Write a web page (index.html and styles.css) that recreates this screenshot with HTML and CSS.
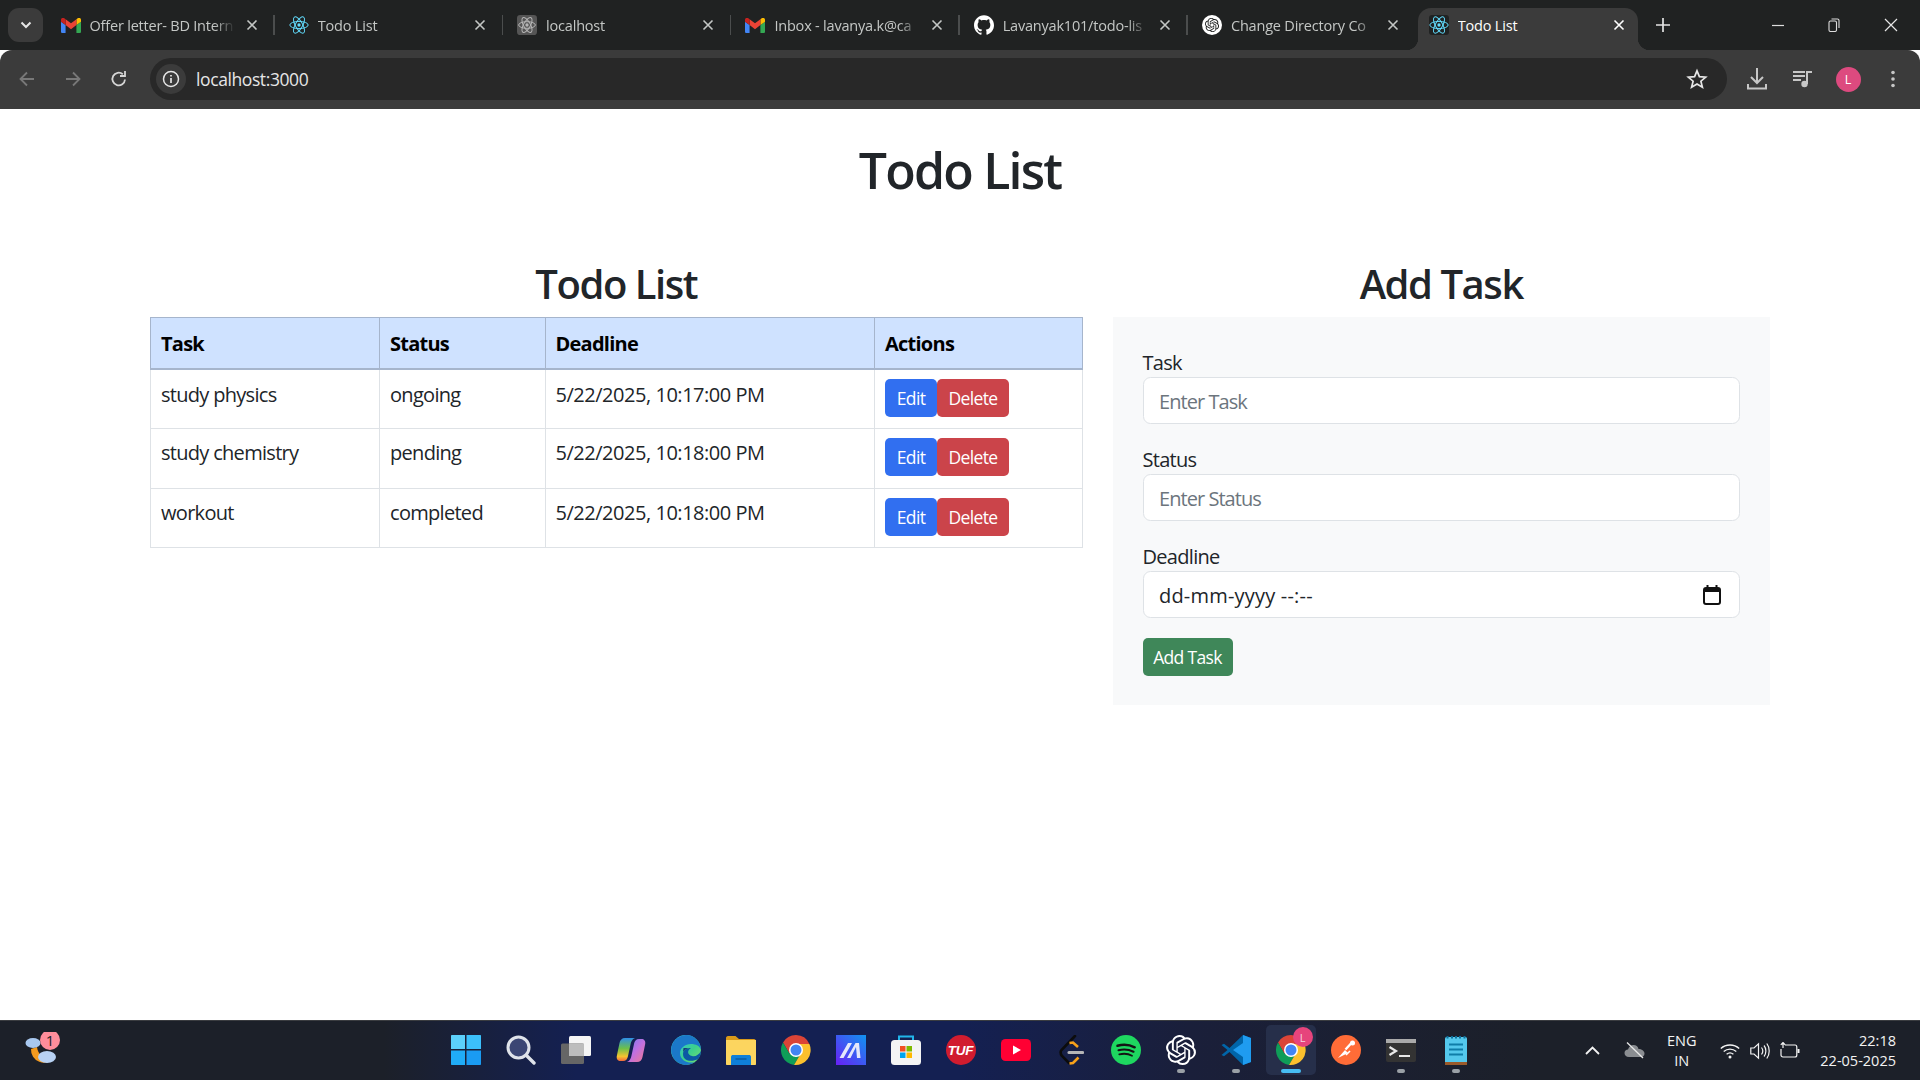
FILE: index.html
```html
<!DOCTYPE html>
<html lang="en">
<head>
<meta charset="utf-8">
<title>Todo List</title>
<link rel="stylesheet" href="styles.css">
</head>
<body>
<svg class="defs" width="0" height="0" aria-hidden="true">
  <defs>
    <symbol id="gmail" viewBox="0 0 24 18">
      <path fill="#4285f4" d="M1.6 18H5.5V8.5L0 4.4V16.4C0 17.3.7 18 1.6 18Z"/>
      <path fill="#34a853" d="M18.5 18H22.400C23.300 18 24 17.300 24 16.400V4.400L18.500 8.500Z"/>
      <path fill="#fbbc04" d="M18.500 1.400V8.500L24 4.400V2.200C24 .2 21.700-1 20.100.2Z"/>
      <path fill="#ea4335" d="M5.500 8.500V1.400L12 6.300 18.500 1.400V8.500L12 13.400Z"/>
      <path fill="#c5221f" d="M0 2.200V4.400L5.500 8.500V1.400L3.900.2C2.300-1 0 .2 0 2.200Z"/>
    </symbol>
    <symbol id="react" viewBox="0 0 24 24">
      <g fill="none" stroke="#61dafb" stroke-width="1.200">
        <ellipse cx="12" cy="12" rx="11" ry="4.300"/>
        <ellipse cx="12" cy="12" rx="11" ry="4.300" transform="rotate(60 12 12)"/>
        <ellipse cx="12" cy="12" rx="11" ry="4.300" transform="rotate(120 12 12)"/>
      </g>
      <circle cx="12" cy="12" r="2" fill="#61dafb"/>
    </symbol>
    <symbol id="react-grey" viewBox="0 0 24 24">
      <rect width="24" height="24" rx="4" fill="#555"/>
      <g fill="none" stroke="#b5b5b5" stroke-width="1.200">
        <ellipse cx="12" cy="12" rx="10" ry="4"/>
        <ellipse cx="12" cy="12" rx="10" ry="4" transform="rotate(60 12 12)"/>
        <ellipse cx="12" cy="12" rx="10" ry="4" transform="rotate(120 12 12)"/>
      </g>
      <circle cx="12" cy="12" r="2" fill="#b5b5b5"/>
    </symbol>
    <symbol id="openai" viewBox="0 0 24 24">
      <path fill="currentColor" d="M22.2819 9.8211a5.9847 5.9847 0 0 0-.5157-4.9108 6.0462 6.0462 0 0 0-6.5098-2.9A6.0651 6.0651 0 0 0 4.9807 4.1818a5.9847 5.9847 0 0 0-3.9977 2.9 6.0462 6.0462 0 0 0 .7427 7.0966 5.98 5.98 0 0 0 .511 4.9107 6.051 6.051 0 0 0 6.5146 2.9001A5.9847 5.9847 0 0 0 13.2599 24a6.0557 6.0557 0 0 0 5.7718-4.2058 5.9894 5.9894 0 0 0 3.9977-2.9001 6.0557 6.0557 0 0 0-.7475-7.0729zm-9.022 12.6081a4.4755 4.4755 0 0 1-2.8764-1.0408l.1419-.0804 4.7783-2.7582a.7948.7948 0 0 0 .3927-.6813v-6.7369l2.02 1.1686a.071.071 0 0 1 .038.052v5.5826a4.504 4.504 0 0 1-4.4945 4.4944zm-9.6607-4.1254a4.4708 4.4708 0 0 1-.5346-3.0137l.142.0852 4.783 2.7582a.7712.7712 0 0 0 .7806 0l5.8428-3.3685v2.3324a.0804.0804 0 0 1-.0332.0615L9.74 19.9502a4.4992 4.4992 0 0 1-6.1408-1.6464zM2.3408 7.8956a4.485 4.485 0 0 1 2.3655-1.9728V11.6a.7664.7664 0 0 0 .3879.6765l5.8144 3.3543-2.0201 1.1685a.0757.0757 0 0 1-.071 0l-4.8303-2.7865A4.504 4.504 0 0 1 2.3408 7.872zm16.5963 3.8558L13.1038 8.364 15.1192 7.2a.0757.0757 0 0 1 .071 0l4.8303 2.7913a4.4944 4.4944 0 0 1-.6765 8.1042v-5.6772a.79.79 0 0 0-.407-.667zm2.0107-3.0231l-.142-.0852-4.7735-2.7818a.7759.7759 0 0 0-.7854 0L9.409 9.2297V6.8974a.0662.0662 0 0 1 .0284-.0615l4.8303-2.7866a4.4992 4.4992 0 0 1 6.6802 4.66zM8.3065 12.863l-2.02-1.1638a.0804.0804 0 0 1-.038-.0567V6.0742a4.4992 4.4992 0 0 1 7.3757-3.4537l-.142.0805L8.704 5.459a.7948.7948 0 0 0-.3927.6813zm1.0976-2.3654l2.602-1.4998 2.6069 1.4998v2.9994l-2.5974 1.4997-2.6067-1.4997Z"/>
    </symbol>
    <symbol id="chrome" viewBox="0 0 30 30">
      <path fill="#db4437" d="M15 0A15 15 0 0 0 2 7.500L8.500 18.800 15 9H28.400A15 15 0 0 0 15 0Z"/>
      <path fill="#0f9d58" d="M2 7.500A15 15 0 0 0 13 29.900L19.500 19 8.500 18.800Z"/>
      <path fill="#fbc02d" d="M28.400 9H15L19.500 19 13 29.900A15 15 0 0 0 28.400 9Z"/>
      <circle cx="15" cy="15" r="7" fill="#fff"/>
      <circle cx="15" cy="15" r="5.500" fill="#4285f4"/>
    </symbol>
    <symbol id="close" viewBox="0 0 12 12">
      <path d="M1.500 1.500 10.500 10.500M10.500 1.500 1.500 10.500" fill="none" stroke="currentColor" stroke-width="1.600"/>
    </symbol>
  </defs>
</svg>

<header class="tabstrip">
  <button class="tabsearch" type="button" aria-label="Search tabs">
    <svg width="12" height="8" viewBox="0 0 12 8"><path d="M1.500 1.500 6 6 10.500 1.500" fill="none" stroke="#e6e6e6" stroke-width="2"/></svg>
  </button>
  <div class="tab sep"><svg class="fav gm"><use href="#gmail"/></svg><span class="tabtitle">Offer letter- BD Intern</span><svg class="tabclose"><use href="#close"/></svg></div>
  <div class="tab sep"><svg class="fav"><use href="#react"/></svg><span class="tabtitle">Todo List</span><svg class="tabclose"><use href="#close"/></svg></div>
  <div class="tab sep"><svg class="fav"><use href="#react-grey"/></svg><span class="tabtitle">localhost</span><svg class="tabclose"><use href="#close"/></svg></div>
  <div class="tab sep"><svg class="fav gm"><use href="#gmail"/></svg><span class="tabtitle">Inbox - lavanya.k@ca</span><svg class="tabclose"><use href="#close"/></svg></div>
  <div class="tab sep"><svg class="fav" viewBox="0 0 24 24"><path fill="#fff" d="M12 .297c-6.630 0-12 5.373-12 12 0 5.303 3.438 9.800 8.205 11.385.600.113.820-.258.820-.577 0-.285-.010-1.040-.015-2.040-3.338.724-4.042-1.610-4.042-1.610C4.422 18.070 3.633 17.700 3.633 17.700c-1.087-.744.084-.729.084-.729 1.205.084 1.838 1.236 1.838 1.236 1.070 1.835 2.809 1.305 3.495.998.108-.776.417-1.305.760-1.605-2.665-.300-5.466-1.332-5.466-5.930 0-1.310.465-2.380 1.235-3.220-.135-.303-.540-1.523.105-3.176 0 0 1.005-.322 3.300 1.230.960-.267 1.980-.399 3-.405 1.020.006 2.040.138 3 .405 2.280-1.552 3.285-1.230 3.285-1.230.645 1.653.240 2.873.120 3.176.765.840 1.230 1.910 1.230 3.220 0 4.610-2.805 5.625-5.475 5.920.420.360.810 1.096.810 2.220 0 1.606-.015 2.896-.015 3.286 0 .315.210.690.825.570C20.565 22.092 24 17.592 24 12.297c0-6.627-5.373-12-12-12"/></svg><span class="tabtitle">Lavanyak101/todo-lis</span><svg class="tabclose"><use href="#close"/></svg></div>
  <div class="tab"><svg class="fav" viewBox="0 0 24 24"><circle cx="12" cy="12" r="12" fill="#fff"/><use href="#openai" x="3.500" y="3.500" width="17" height="17" class="darkglyph"/></svg><span class="tabtitle">Change Directory Co</span><svg class="tabclose"><use href="#close"/></svg></div>
  <div class="tab active"><svg class="fav favbox"><use href="#react"/></svg><span class="tabtitle">Todo List</span><svg class="tabclose"><use href="#close"/></svg></div>
  <svg class="newtab" width="14" height="14" viewBox="0 0 14 14"><path d="M7 0V14M0 7H14" stroke="#e3e3e3" stroke-width="1.700"/></svg>
  <div class="winctl">
    <svg width="12" height="12" viewBox="0 0 12 12"><path d="M0 6.500H12" stroke="#ddd" stroke-width="1.200"/></svg>
    <svg width="12" height="14" viewBox="0 0 12 14"><path d="M1 4.500C1 3.500 1.500 3 2.500 3H7C8 3 8.500 3.500 8.500 4.500V12C8.500 13 8 13.500 7 13.500H2.500C1.500 13.500 1 13 1 12ZM3.500 1H9.500C10.500 1 11 1.500 11 2.500V10" fill="none" stroke="#ddd" stroke-width="1.100"/></svg>
    <svg width="14" height="14" viewBox="0 0 14 14"><path d="M1 1 13 13M13 1 1 13" stroke="#e6e6e6" stroke-width="1.200"/></svg>
  </div>
</header>

<nav class="toolbar">
  <svg class="tool dim" width="20" height="20" viewBox="0 0 20 20"><path d="M17 10H4M10 3.500 3.500 10 10 16.500" fill="none" stroke="currentColor" stroke-width="1.800"/></svg>
  <svg class="tool dim" width="20" height="20" viewBox="0 0 20 20"><path d="M3 10H16M10 3.500 16.500 10 10 16.500" fill="none" stroke="currentColor" stroke-width="1.800"/></svg>
  <svg class="tool" width="20" height="20" viewBox="0 0 20 20"><path d="M16 10.500A6.300 6.300 0 1 1 13.800 5.200M16 2V7H11" fill="none" stroke="currentColor" stroke-width="1.800"/></svg>
  <div class="omnibox">
    <span class="siteinfo"><svg width="18" height="18" viewBox="0 0 18 18"><circle cx="9" cy="9" r="7.500" fill="none" stroke="#e6e6e6" stroke-width="1.500"/><path d="M9 8V13M9 5V6.600" stroke="#e6e6e6" stroke-width="1.700"/></svg></span>
    <span class="url">localhost:3000</span>
    <svg class="star" width="22" height="22" viewBox="0 0 22 22"><path d="M11 2.800 13.400 8.600 19.700 9.100 14.900 13.200 16.400 19.300 11 16 5.600 19.300 7.100 13.200 2.300 9.100 8.600 8.600Z" fill="none" stroke="#e6e6e6" stroke-width="1.700"/></svg>
  </div>
  <div class="tools-right">
    <svg class="tr-dl" width="22" height="24" viewBox="0 0 22 24"><path d="M11 1V15M5 10 11 16 17 10" fill="none" stroke="#c7c7c7" stroke-width="2"/><path d="M2 17V21.500H20V17" fill="none" stroke="#c7c7c7" stroke-width="2"/></svg>
    <svg class="tr-media" width="20" height="20" viewBox="0 0 20 20"><path d="M0 3H12M0 7H12M0 11H8" stroke="#c7c7c7" stroke-width="1.800"/><path d="M14 3H19M14 2V15" fill="none" stroke="#c7c7c7" stroke-width="2"/><circle cx="11.500" cy="15" r="3.200" fill="#c7c7c7"/></svg>
    <span class="avatar">L</span>
    <svg class="tr-menu" width="4" height="18" viewBox="0 0 4 18"><circle cx="2" cy="2.500" r="1.800" fill="#c7c7c7"/><circle cx="2" cy="9" r="1.800" fill="#c7c7c7"/><circle cx="2" cy="15.500" r="1.800" fill="#c7c7c7"/></svg>
  </div>
</nav>

<main class="page">
  <h1 class="title">Todo List</h1>
  <div class="row">
    <section class="col-list">
      <h2 class="subtitle">Todo List</h2>
      <table class="tasks">
        <thead>
          <tr><th class="c1">Task</th><th class="c2">Status</th><th class="c3">Deadline</th><th class="c4">Actions</th></tr>
        </thead>
        <tbody>
          <tr><td>study physics</td><td>ongoing</td><td class="when">5/22/2025, 10:17:00 PM</td><td class="acts"><button class="btn edit" type="button">Edit</button><button class="btn del" type="button">Delete</button></td></tr>
          <tr><td>study chemistry</td><td>pending</td><td class="when">5/22/2025, 10:18:00 PM</td><td class="acts"><button class="btn edit" type="button">Edit</button><button class="btn del" type="button">Delete</button></td></tr>
          <tr><td>workout</td><td>completed</td><td class="when">5/22/2025, 10:18:00 PM</td><td class="acts"><button class="btn edit" type="button">Edit</button><button class="btn del" type="button">Delete</button></td></tr>
        </tbody>
      </table>
    </section>
    <section class="col-form">
      <h2 class="subtitle">Add Task</h2>
      <form class="panel">
        <div class="field"><label class="lbl" for="t">Task</label><input class="ctl" id="t" type="text" placeholder="Enter Task"></div>
        <div class="field"><label class="lbl" for="s">Status</label><input class="ctl" id="s" type="text" placeholder="Enter Status"></div>
        <div class="field">
          <label class="lbl" for="d">Deadline</label>
          <div class="ctl datectl" id="d"><span class="dateval">dd-mm-yyyy --:--</span>
            <svg width="18" height="20" viewBox="0 0 18 20"><path d="M4.500 0V3M13.500 0V3" stroke="#111" stroke-width="2"/><rect x="1" y="3" width="16" height="16" rx="2" fill="none" stroke="#111" stroke-width="2"/><rect x="1" y="3" width="16" height="4" fill="#111"/></svg>
          </div>
        </div>
        <button class="btn add" type="button">Add Task</button>
      </form>
    </section>
  </div>
</main>

<footer class="taskbar">
  <div class="weather">
    <svg width="40" height="38" viewBox="0 0 40 38">
      <path d="M8 17A13 13 0 0 0 31 26C22 27 15 24 14 15Z" fill="#f39a1e"/>
      <ellipse cx="10" cy="11" rx="7.500" ry="5" fill="#a8c8f0"/>
      <ellipse cx="24" cy="25" rx="9" ry="6" fill="#b8d2f4"/>
      <circle cx="27" cy="8" r="10" fill="#ff8d9b"/>
    </svg>
    <span class="wbadge">1</span>
  </div>
  <div class="apps">
    <span class="app"><svg width="30" height="30" viewBox="0 0 30 30"><path fill="#5cd0fb" d="M1 0H14V14H0V1C0 .4.400 0 1 0Z"/><path fill="#3cc0fb" d="M15.500 0H29C29.600 0 30 .4 30 1V14H15.500Z"/><path fill="#20acf7" d="M0 15.500H14V30H1C.4 30 0 29.600 0 29Z"/><path fill="#1a9bf2" d="M15.500 15.500H30V29C30 29.600 29.600 30 29 30H15.500Z"/></svg></span>
    <span class="app"><svg width="30" height="30" viewBox="0 0 30 30"><circle cx="12.500" cy="12.500" r="10.500" fill="#3b4674" stroke="#dfe3ea" stroke-width="3"/><path d="M20.500 20.500 28 28" stroke="#dfe3ea" stroke-width="3.400" stroke-linecap="round"/></svg></span>
    <span class="app"><svg width="30" height="30" viewBox="0 0 30 30"><rect x="8" y="1" width="22" height="20" rx="1.500" fill="#f5f5f5"/><rect y="8.500" width="23" height="20.500" rx="1.500" fill="#666"/><rect x="8" y="8.500" width="15" height="12.500" fill="#bdbdbd"/></svg></span>
    <span class="app"><svg width="30" height="30" viewBox="0 0 30 30"><defs><linearGradient id="cp1" x1="0" y1="0" x2="0" y2="1"><stop offset="0" stop-color="#2f8fe8"/><stop offset=".45" stop-color="#6cc04a"/><stop offset=".8" stop-color="#f4c430"/><stop offset="1" stop-color="#f2683c"/></linearGradient><linearGradient id="cp2" x1="0" y1="0" x2="1" y2="1"><stop offset="0" stop-color="#6a7cf0"/><stop offset=".5" stop-color="#c070e0"/><stop offset="1" stop-color="#f07a90"/></linearGradient></defs><path fill="url(#cp1)" d="M9 3H19C16 4 15 7 14.500 9.500L12 21C11.500 24 10 26 7 26H4.500C2 26 .2 24 .8 21L3.500 8C4 5 6 3 9 3Z"/><path fill="url(#cp2)" d="M21 27H11C14 26 15 23 15.500 20.500L18 9C18.500 6 20 4 23 4H25.500C28 4 29.800 6 29.200 9L26.500 22C26 25 24 27 21 27Z"/></svg></span>
    <span class="app"><svg width="30" height="30" viewBox="0 0 30 30"><defs><linearGradient id="ed" x1="0" y1="0" x2="1" y2="1"><stop offset="0" stop-color="#35c1f1"/><stop offset=".6" stop-color="#3bd08d"/><stop offset="1" stop-color="#7fe06a"/></linearGradient></defs><circle cx="15" cy="15" r="15" fill="url(#ed)"/><path fill="#1b78c9" d="M15 0A15 15 0 0 0 5 26 15 15 0 0 0 24 27C18 29 9 26 9 18 9 13 14 9 20 9 25 9 29 11 30 15A15 15 0 0 0 15 0Z"/><path fill="#0c59a4" d="M27 24C22 27 12 27 12 19 12 15 16 13 20 13 16 15 16 20 21 21 24 22 28 20 30 16 30 19 29 22 27 24Z"/><path fill="#153a7a" d="M12.500 13H20A9 9 0 0 0 12 17Z"/></svg></span>
    <span class="app"><svg width="30" height="30" viewBox="0 0 30 30"><path fill="#d99a1a" d="M0 3C0 2 .8 1 2 1H9.500L13 4H28C29 4 30 5 30 6V10H0Z"/><path fill="#fcd55f" d="M0 5H30V29C30 29.600 29.600 30 29 30H1C.4 30 0 29.600 0 29Z"/><path fill="#0f7fd8" d="M5 22C5 20.500 6 20 7 20H23C24 20 25 20.500 25 22V30H5Z"/><path d="M9.500 24H20.500" stroke="#0a5ba3" stroke-width="1.500"/></svg></span>
    <span class="app"><svg width="30" height="30"><use href="#chrome"/></svg></span>
    <span class="app"><svg width="30" height="30" viewBox="0 0 30 30"><defs><linearGradient id="mm" x1="0" y1="1" x2="1" y2="0"><stop offset="0" stop-color="#6a1ff5"/><stop offset="1" stop-color="#1094f0"/></linearGradient></defs><rect width="30" height="30" fill="url(#mm)"/><path fill="#e4e7fb" d="M3.500 23 12 8H16L7.500 23ZM11 23 19.500 8H23L24.500 23H21L20 12 14.500 23Z"/></svg></span>
    <span class="app"><svg width="30" height="30" viewBox="0 0 30 30"><path d="M8 6V1.500H22V6" fill="none" stroke="#21b5ea" stroke-width="2"/><rect y="5" width="30" height="25" rx="3.500" fill="#f4f4f4"/><rect x="9" y="11" width="5.500" height="5.500" fill="#f25022"/><rect x="15.500" y="11" width="5.500" height="5.500" fill="#7fba00"/><rect x="9" y="17.500" width="5.500" height="5.500" fill="#00a4ef"/><rect x="15.500" y="17.500" width="5.500" height="5.500" fill="#ffb900"/></svg></span>
    <span class="app"><span class="tuf">TUF</span></span>
    <span class="app"><svg width="30" height="22" viewBox="0 0 30 22"><rect width="30" height="22" rx="4.500" fill="#ff0033"/><path d="M12 6.500 20 11 12 15.500Z" fill="#fff"/></svg></span>
    <span class="app"><svg width="26" height="30" viewBox="0 0 26 30"><path d="M17 1 3.500 15C2 17 2.500 19 4 21L11 28" fill="none" stroke="#0c0c0c" stroke-width="2.600" stroke-linecap="round"/><path d="M11.500 8 15 7.500 20 12" fill="none" stroke="#f7a11a" stroke-width="2.600"/><path d="M11.500 28.500 15 28 20.500 22.500" fill="none" stroke="#f7a11a" stroke-width="2.600"/><path d="M11 17.500H24.500" stroke="#b6b6b6" stroke-width="3.200" stroke-linecap="round"/></svg></span>
    <span class="app"><svg width="30" height="30" viewBox="0 0 30 30"><circle cx="15" cy="15" r="15" fill="#1ed760"/><g fill="none" stroke="#141414" stroke-linecap="round"><path d="M6.500 10.800C12 9.300 18.500 9.700 23.700 12.300" stroke-width="2.500"/><path d="M7.500 15.200C12.500 13.900 18 14.400 22.500 16.700" stroke-width="2.100"/><path d="M8.300 19.300C12.500 18.400 17.500 18.700 21 20.700" stroke-width="1.800"/></g></svg></span>
    <span class="app run"><svg class="white" width="30" height="30"><use href="#openai"/></svg></span>
    <span class="app run"><svg width="30" height="30" viewBox="0 0 30 30"><path fill="#0065a9" d="M22 0 8.500 13 3 8.800.500 10 6.500 15 .500 20 3 21.200 8.500 17 22 30 30 27V3Z"/><path fill="#1f9cf0" d="M22 0 30 3V27L22 30ZM22 8 12 15 22 22Z"/></svg></span>
    <span class="app run current"><span class="curbox"><svg width="30" height="30"><use href="#chrome"/></svg><span class="cbadge">L</span></span></span>
    <span class="app"><svg width="30" height="30" viewBox="0 0 30 30"><circle cx="15" cy="15" r="15" fill="#ff6c37"/><path d="M7 23 14 15 17 18Z" fill="#fff"/><path d="M14.500 14.500 20 8.500" stroke="#fff" stroke-width="2.400"/><circle cx="21.500" cy="8" r="2.500" fill="#fff"/><path d="M15 20 19 16" stroke="#fff" stroke-width="1.600"/></svg></span>
    <span class="app run"><svg width="30" height="23" viewBox="0 0 30 23"><rect width="30" height="23" rx="2" fill="#333"/><rect width="30" height="4" fill="#aaa"/><path d="M3.500 8 10 12 3.500 16" fill="none" stroke="#e8e8e8" stroke-width="2.200"/><path d="M13 17H24" stroke="#e8e8e8" stroke-width="2"/></svg></span>
    <span class="app run"><svg width="22" height="30" viewBox="0 0 22 30"><rect y="2" width="22" height="28" rx="1.500" fill="#54c8ec"/><rect y="27" width="22" height="3" fill="#9a5a2a"/><path d="M2.500 1V3.500M7 1V3.500M11 1V3.500M15 1V3.500M19.500 1V3.500" stroke="#0f6f9a" stroke-width="2"/><path d="M4 9.500H18M4 14.500H18M4 19.500H18" stroke="#0f7da8" stroke-width="2"/></svg></span>
  </div>
  <div class="tray">
    <svg class="chev" width="15" height="9" viewBox="0 0 15 9"><path d="M1 8 7.500 1.500 14 8" fill="none" stroke="#f3f3f3" stroke-width="1.800"/></svg>
    <svg class="cloud" width="21" height="17" viewBox="0 0 21 17"><path d="M5 15C2 15 .5 13 .5 11 .5 9 2 7.500 4 7.500 5 4.500 7 3 9.500 3 12 3 14 4.500 14.500 7 17.500 7 20.500 9 20.500 11.500 20.500 13.500 19 15 17 15Z" fill="#8a8d91"/><path d="M3 .5 19 16" stroke="#e8e8e8" stroke-width="1.300"/></svg>
    <div class="lang"><span>ENG</span><span>IN</span></div>
    <svg class="tray-icon" width="20" height="16" viewBox="0 0 20 16"><g fill="none" stroke="#f3f3f3" stroke-width="1.300"><path d="M.8 5.500C5.800 .8 14.200 .8 19.200 5.500"/><path d="M3.700 8.500C7.300 5.300 12.700 5.300 16.300 8.500"/><path d="M6.600 11.300C8.600 9.700 11.400 9.700 13.400 11.300"/></g><circle cx="10" cy="14" r="1.500" fill="#f3f3f3"/></svg>
    <svg class="tray-icon" width="20" height="18" viewBox="0 0 20 18"><g fill="none" stroke="#f3f3f3" stroke-width="1.200"><path d="M.8 6H4L8.500 1.800V16.200L4 12H.8Z"/><path d="M11.500 5.500C13 7.500 13 10.500 11.500 12.500"/><path d="M14 3.500C16.500 6.500 16.500 11.500 14 14.500"/><path d="M16.800 1.500C20 5.500 20 12.500 16.800 16.500"/></g></svg>
    <svg class="tray-icon" width="20" height="17" viewBox="0 0 20 17"><g fill="none" stroke="#f3f3f3" stroke-width="1.200"><path d="M5 3H15C16 3 16.800 3.800 16.800 5V13C16.800 14.200 16 15 15 15H3C1.800 15 1 14.200 1 13V7"/></g><path d="M18.500 7V11" stroke="#f3f3f3" stroke-width="2"/><path d="M3 .5V6M.8 2.800 3 .5 5.200 2.800" fill="none" stroke="#f3f3f3" stroke-width="1.200"/></svg>
    <div class="clock"><span>22:18</span><span>22-05-2025</span></div>
  </div>
</footer>
</body>
</html>
```

FILE: styles.css
```css
* { box-sizing: border-box; }
html, body { margin: 0; padding: 0; }
body {
  width: 1920px;
  height: 1080px;
  overflow: hidden;
  display: flex;
  flex-direction: column;
  background: #fff;
  color: #212529;
  font-family: "Open Sans", "Noto Sans", "Liberation Sans", sans-serif;
}
.defs { position: absolute; }

/* Browser chrome */
.tabstrip {
  height: 50px;
  flex: none;
  background: #202222;
  display: flex;
  align-items: flex-start;
  padding-left: 8px;
  font-size: 14.500px;
  letter-spacing: -0.200px;
}
.tabsearch {
  width: 35px;
  height: 34px;
  margin-top: 8px;
  margin-right: 3.500px;
  flex: none;
  border: 0;
  padding: 0;
  border-radius: 11px;
  background: #3b3b3b;
  display: flex;
  align-items: center;
  justify-content: center;
}
.tab {
  width: 228.300px;
  height: 42px;
  margin-top: 8px;
  flex: none;
  position: relative;
  display: flex;
  align-items: center;
  padding: 0 17px 8px 14px;
  color: #c4c7c5;
}
.tab.sep::after {
  content: "";
  position: absolute;
  right: 0;
  top: 7px;
  width: 1.500px;
  height: 20px;
  background: #4b4d4d;
}
.tab.active {
  background: #3b3b3b;
  color: #fff;
  border-radius: 13px 13px 0 0;
  width: 220px;
  margin-left: 2px;
  padding-left: 10.500px;
  padding-right: 13.500px;
}
.tab.active::before, .tab.active::after {
  content: "";
  position: absolute;
  bottom: 0;
  width: 12px;
  height: 12px;
}
.tab.active::before { left: -12px; background: radial-gradient(circle at 0 0, #202222 12px, #3b3b3b 12.500px); }
.tab.active::after { right: -12px; background: radial-gradient(circle at 100% 0, #202222 12px, #3b3b3b 12.500px); }
.fav { width: 20px; height: 20px; flex: none; }
.fav.gm { height: 15px; }
.fav.favbox { background: #202222; border-radius: 3px; }
.darkglyph { color: #202222; }
.tabtitle {
  flex: 1;
  min-width: 0;
  margin-left: 9px;
  white-space: nowrap;
  overflow: hidden;
  -webkit-mask-image: linear-gradient(to right, #000 84%, transparent 98%);
  mask-image: linear-gradient(to right, #000 84%, transparent 98%);
}
.active .tabtitle { -webkit-mask-image: none; mask-image: none; }
.tabclose { width: 12px; height: 12px; flex: none; margin-left: 8px; }
.newtab { margin-left: 17.500px; margin-top: 18px; flex: none; }
.winctl {
  margin-left: auto;
  display: flex;
  align-items: center;
  gap: 44px;
  height: 50px;
  padding-right: 22px;
}
.toolbar {
  height: 59px;
  flex: none;
  background: #3b3b3b;
  display: flex;
  align-items: center;
  padding: 0 0 1px 17px;
  border-radius: 12px 12px 0 0;
  color: #d6d6d6;
}
.tool { flex: none; margin-right: 26px; }
.tool.dim { color: #787878; }
.omnibox {
  width: 1577px;
  margin-left: -5px;
  height: 42px;
  background: #282828;
  border-radius: 21px;
  display: flex;
  align-items: center;
  padding: 0 19px 0 6px;
  font-size: 17.500px;
  letter-spacing: -0.400px;
  color: #e6e6e6;
}
.siteinfo {
  width: 30px;
  height: 30px;
  border-radius: 50%;
  background: #3b3b3b;
  display: flex;
  align-items: center;
  justify-content: center;
  flex: none;
}
.url { margin-left: 10px; flex: 1; }
.star { flex: none; }
.tools-right {
  flex: 1;
  display: flex;
  align-items: center;
  padding-left: 19px;
}
.tr-media { margin-left: 25px; }
.avatar {
  width: 25px;
  height: 25px;
  margin-left: 22.500px;
  border-radius: 50%;
  background: #dd4a7f;
  color: #fff;
  font-size: 12.500px;
  display: flex;
  align-items: center;
  justify-content: center;
}
.tr-menu { margin-left: 30.500px; }

/* Page */
.page {
  flex: 1;
  min-height: 0;
  padding: 30px 150px 0;
  font-size: 20px;
  letter-spacing: -0.700px;
  line-height: 30px;
}
.title {
  margin: 0 0 60px;
  padding-top: 1px;
  height: 60px;
  text-align: center;
  font-size: 50px;
  line-height: 60px;
  font-weight: 560;
  letter-spacing: -1.800px;
}
.row { display: flex; gap: 30px; }
.col-list { width: 932.500px; flex: none; }
.col-form { flex: 1; min-width: 0; }
.subtitle {
  margin: 0 0 10px;
  padding-top: 1px;
  height: 48px;
  text-align: center;
  font-size: 40px;
  line-height: 48px;
  font-weight: 560;
  letter-spacing: -1.450px;
}
.tasks {
  width: 100%;
  border-collapse: collapse;
  table-layout: fixed;
}
.tasks th, .tasks td {
  border: 1px solid #dee2e6;
  padding: 10px;
  text-align: left;
  vertical-align: top;
  color: #212529;
}
.tasks th {
  background: #cfe2ff;
  border-color: #a6b5cc;
  border-bottom-width: 2px;
  font-weight: 700;
  letter-spacing: -0.750px;
  padding-top: 11px;
  padding-bottom: 9px;
  color: #000;
}
.tasks td { height: 59px; padding-top: 9.500px; padding-bottom: 6px; }
.tasks tbody tr:nth-child(2) td { height: 60px; }
.tasks td.acts { padding-top: 9px; }
.tasks td.when { letter-spacing: -0.470px; }
.c1 { width: 229px; }
.c2 { width: 165.500px; }
.c3 { width: 329.500px; }
.btn {
  font-family: inherit;
  border: 0;
  color: #fff;
  font-size: 17.500px;
  line-height: 26px;
  height: 38px;
  padding: 0 10px;
  border-radius: 5px;
  letter-spacing: -0.650px;
  vertical-align: top;
}
.btn.edit { background: #316ff0; width: 52px; }
.btn.del { background: #cb444a; width: 72px; }
.btn.add { background: #3f8759; width: 90px; padding: 0; display: block; }
.panel { background: #f8f9fa; padding: 30px; height: 388px; }
.field { margin-bottom: 20px; }
.lbl { display: block; padding-top: 1px; height: 30px; }
.ctl {
  display: block;
  width: 100%;
  height: 47px;
  font: inherit;
  letter-spacing: -0.950px;
  padding: 9px 15.500px 7px;
  border: 1px solid #dee2e6;
  border-radius: 7.500px;
  background: #fff;
  color: #212529;
}
.ctl::placeholder { color: #6c757d; opacity: 1; }
.datectl { display: flex; align-items: center; justify-content: space-between; padding: 0 18px 0 15.500px; }
.dateval { letter-spacing: 0.200px; padding-top: 2px; }

/* Taskbar */
.taskbar {
  height: 60px;
  flex: none;
  display: flex;
  align-items: center;
  border-top: 1px solid #3a3c40;
  background: linear-gradient(to right, #1c2029 0, #1c2029 20%, #142052 30%, #142052 50%, #1a1f3a 62%, #1c2029 80%, #1c2029 100%);
  color: #f3f3f3;
}
.weather { width: 438px; flex: none; padding-left: 23px; position: relative; height: 38px; }
.wbadge { position: absolute; left: 42px; top: 0; width: 16px; text-align: center; font-size: 15px; line-height: 16px; color: #1c2029; }
.apps { display: flex; flex: none; align-self: flex-start; }
.app {
  width: 55px;
  height: 58px;
  position: relative;
  display: flex;
  align-items: center;
  justify-content: center;
  flex: none;
}
.white { color: #fff; }
.app.run::after {
  content: "";
  position: absolute;
  bottom: 6px;
  left: 50%;
  width: 8px;
  height: 4px;
  margin-left: -4px;
  border-radius: 2px;
  background: #9aa0a6;
}
.app.current::after { width: 20px; margin-left: -10px; background: #47bdf2; bottom: 6px; }
.curbox {
  width: 50px;
  height: 50px;
  border-radius: 5px;
  background: #262f4a;
  display: flex;
  align-items: center;
  justify-content: center;
  position: relative;
}
.cbadge {
  position: absolute;
  right: 3px;
  top: 2px;
  width: 20px;
  height: 20px;
  border-radius: 50%;
  background: #e6447c;
  color: #f6d4e0;
  font-size: 11px;
  display: flex;
  align-items: center;
  justify-content: center;
}
.tuf {
  width: 30px;
  height: 30px;
  border-radius: 50%;
  background: #d11c2f;
  color: #fff;
  font: italic 700 13.500px "Liberation Sans", sans-serif;
  display: flex;
  align-items: center;
  justify-content: center;
  letter-spacing: -0.300px;
}
.tray { flex: 1; display: flex; align-items: center; font-size: 15px; line-height: 20px; }
.chev { margin-left: 102px; }
.cloud { margin-left: 24px; }
.lang { margin: 0 23px 0 22px; display: flex; flex-direction: column; align-items: center; font-size: 14.500px; }
.tray-icon + .tray-icon { margin-left: 10px; }
.clock { margin-left: auto; padding-right: 24px; display: flex; flex-direction: column; align-items: flex-end; font-size: 14.500px; }
```
